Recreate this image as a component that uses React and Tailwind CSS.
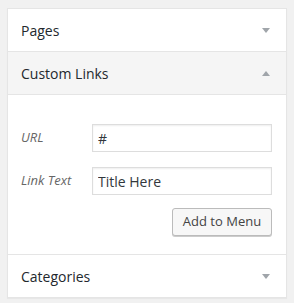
import React from "react";

const Arrow = ({ up }) => (
  <svg width="8" height="5" viewBox="0 0 8 5" className="block">
    {up ? <polygon points="0,5 8,5 4,0" fill="#a0a5aa" /> : <polygon points="0,0 8,0 4,5" fill="#a0a5aa" />}
  </svg>
);

const Header = ({ title, up, bg }) => (
  <div className={`flex h-[42px] items-center justify-between pl-[13px] pr-[16px] ${bg}`}>
    <span className="text-[14px] text-[#23282d]">{title}</span>
    <Arrow up={up} />
  </div>
);

export default function App() {
  return (
    <div className="h-[303px] w-[294px] bg-[#f1f1f1] pt-[8px] pl-[7px]" style={{ fontFamily: '"Open Sans", sans-serif' }}>
      <div className="w-[280px] border border-[#e5e5e5] bg-white shadow-[0_1px_1px_rgba(0,0,0,0.04)]">
        <div className="border-b border-[#e5e5e5]">
          <Header title="Pages" bg="bg-white" />
        </div>
        <div className="border-b border-[#e5e5e5]">
          <Header title="Custom Links" up bg="bg-[#f5f5f5]" />
        </div>
        <div className="border-b border-[#e5e5e5] pt-[29px] pb-[18px] pl-[13px] pr-[14px]">
          <div className="flex items-center">
            <span className="w-[71px] text-[13px] italic text-[#666]">URL</span>
            <input
              readOnly
              value="#"
              className="h-[28px] w-[180px] border border-[#ddd] px-[5px] text-[14px] text-[#32373c] shadow-[inset_0_1px_2px_rgba(0,0,0,0.07)] outline-none"
              style={{ fontFamily: '"Open Sans", sans-serif' }}
            />
          </div>
          <div className="mt-[15px] flex items-center">
            <span className="w-[71px] text-[13px] italic text-[#666]">Link Text</span>
            <input
              readOnly
              value="Title Here"
              className="h-[28px] w-[180px] border border-[#ddd] px-[5px] text-[14px] text-[#32373c] shadow-[inset_0_1px_2px_rgba(0,0,0,0.07)] outline-none"
              style={{ fontFamily: '"Open Sans", sans-serif' }}
            />
          </div>
          <div className="mt-[13px] flex justify-end">
            <button className="h-[28px] w-[100px] rounded-[3px] border border-[#bbb] bg-[#f7f7f7] text-[13px] text-[#444] shadow-[0_1px_0_#ccc]">
              Add to Menu
            </button>
          </div>
        </div>
        <Header title="Categories" bg="bg-white" />
      </div>
    </div>
  );
}
